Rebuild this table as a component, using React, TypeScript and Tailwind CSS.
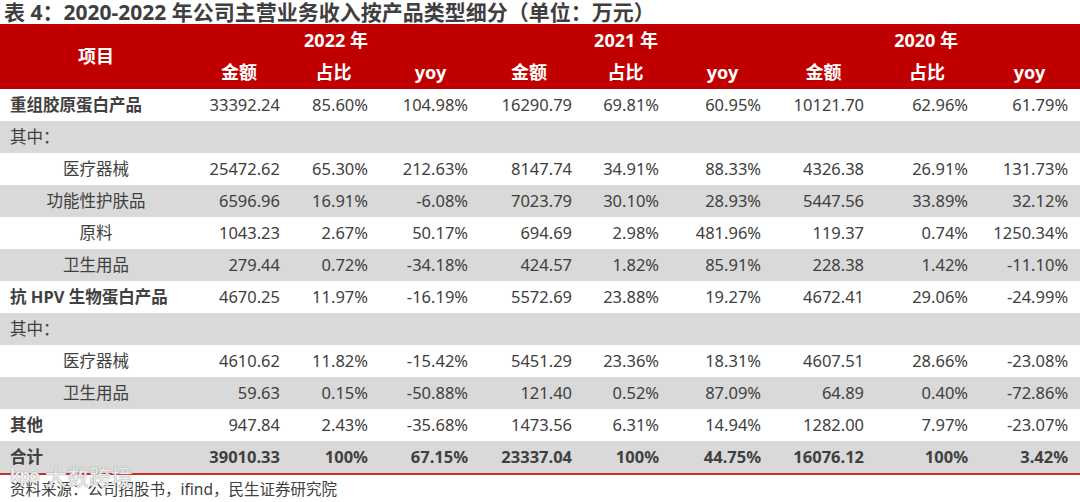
const cols = [
  'w-[192px]',
  'w-[94px]',
  'w-[95px]',
  'w-[99px]',
  'w-[98px]',
  'w-[95px]',
  'w-[99px]',
  'w-[103px]',
  'w-[104px]',
  'w-[101px]',
];

// right padding of each data column, so numbers land where the reference has them
const pads = [
  'pr-[6px]',
  'pr-[13px]',
  'pr-[12px]',
  'pr-[6px]',
  'pr-[14px]',
  'pr-[11px]',
  'pr-[11px]',
  'pr-[11px]',
  'pr-[12px]',
];

type Row = {
  label: string;
  kind: 'main' | 'note' | 'sub' | 'total';
  values?: string[];
};

const rows: Row[] = [
  { label: '重组胶原蛋白产品', kind: 'main', values: ['33392.24', '85.60%', '104.98%', '16290.79', '69.81%', '60.95%', '10121.70', '62.96%', '61.79%'] },
  { label: '其中：', kind: 'note' },
  { label: '医疗器械', kind: 'sub', values: ['25472.62', '65.30%', '212.63%', '8147.74', '34.91%', '88.33%', '4326.38', '26.91%', '131.73%'] },
  { label: '功能性护肤品', kind: 'sub', values: ['6596.96', '16.91%', '-6.08%', '7023.79', '30.10%', '28.93%', '5447.56', '33.89%', '32.12%'] },
  { label: '原料', kind: 'sub', values: ['1043.23', '2.67%', '50.17%', '694.69', '2.98%', '481.96%', '119.37', '0.74%', '1250.34%'] },
  { label: '卫生用品', kind: 'sub', values: ['279.44', '0.72%', '-34.18%', '424.57', '1.82%', '85.91%', '228.38', '1.42%', '-11.10%'] },
  { label: '抗 HPV 生物蛋白产品', kind: 'main', values: ['4670.25', '11.97%', '-16.19%', '5572.69', '23.88%', '19.27%', '4672.41', '29.06%', '-24.99%'] },
  { label: '其中：', kind: 'note' },
  { label: '医疗器械', kind: 'sub', values: ['4610.62', '11.82%', '-15.42%', '5451.29', '23.36%', '18.31%', '4607.51', '28.66%', '-23.08%'] },
  { label: '卫生用品', kind: 'sub', values: ['59.63', '0.15%', '-50.88%', '121.40', '0.52%', '87.09%', '64.89', '0.40%', '-72.86%'] },
  { label: '其他', kind: 'main', values: ['947.84', '2.43%', '-35.68%', '1473.56', '6.31%', '14.94%', '1282.00', '7.97%', '-23.07%'] },
  { label: '合计', kind: 'total', values: ['39010.33', '100%', '67.15%', '23337.04', '100%', '44.75%', '16076.12', '100%', '3.42%'] },
];

const years = ['2022 年', '2021 年', '2020 年'];
const subHeads = ['金额', '占比', 'yoy'];

export default function App() {
  return (
    <div className="w-[1080px] h-[502px] bg-white overflow-hidden text-[#404040] font-['Noto_Sans','Noto_Sans_CJK_SC',sans-serif]">
      <h1 className="h-[24px] pl-[4px] text-[21px] leading-[24px] font-bold text-[#3f3f3f] whitespace-nowrap">
        表 4：2020-2022 年公司主营业务收入按产品类型细分（单位：万元）
      </h1>

      <table className="w-[1080px] table-fixed border-collapse">
        <colgroup>
          {cols.map((c, i) => (
            <col key={i} className={c} />
          ))}
        </colgroup>
        <thead className="bg-[#c00000] text-white font-bold text-[18px]">
          <tr className="h-[32px]">
            <th rowSpan={2} className="text-center font-bold">
              项目
            </th>
            {years.map((y) => (
              <th key={y} colSpan={3} className="text-center font-bold leading-[32px]">
                {y}
              </th>
            ))}
          </tr>
          <tr className="h-[33px]">
            {years.map((y) =>
              subHeads.map((s) => (
                <th key={y + s} className="text-center font-bold leading-[33px]">
                  {s}
                </th>
              ))
            )}
          </tr>
        </thead>
        <tbody className="text-[16.5px]">
          {rows.map((r, i) => (
            <tr key={i} className={`h-[32px] ${i % 2 === 1 ? 'bg-[#d9d9d9]' : 'bg-white'}`}>
              {r.kind === 'sub' ? (
                <td className="text-center whitespace-nowrap">{r.label}</td>
              ) : r.kind === 'note' ? (
                <td className="pl-[10px] whitespace-nowrap">{r.label}</td>
              ) : (
                <td className="pl-[10px] font-bold whitespace-nowrap">{r.label}</td>
              )}
              {pads.map((p, j) => (
                <td
                  key={j}
                  className={`${p} text-right whitespace-nowrap ${r.kind === 'total' ? 'font-bold' : ''}`}
                >
                  {r.values ? r.values[j] : ''}
                </td>
              ))}
            </tr>
          ))}
        </tbody>
      </table>

      <div className="h-[2px] bg-[#d22a2a]" />

      <div className="relative">
        <p className="pl-[10px] pt-[3px] text-[15.5px] leading-[22px] text-[#404040] whitespace-nowrap">
          资料来源：公司招股书，ifind，民生证券研究院
        </p>
        {/* watermark sitting over the source line */}
        <div className="absolute left-[10px] top-[-12px] flex items-center gap-[6px] text-white/80 [text-shadow:0_0_1px_#9a9a9a,0_0_1px_#9a9a9a] pointer-events-none">
          <span className="text-[17px] font-bold tracking-[-1px]">kpo</span>
          <span className="text-[22px] leading-[26px]">大数跨境</span>
        </div>
      </div>
    </div>
  );
}
